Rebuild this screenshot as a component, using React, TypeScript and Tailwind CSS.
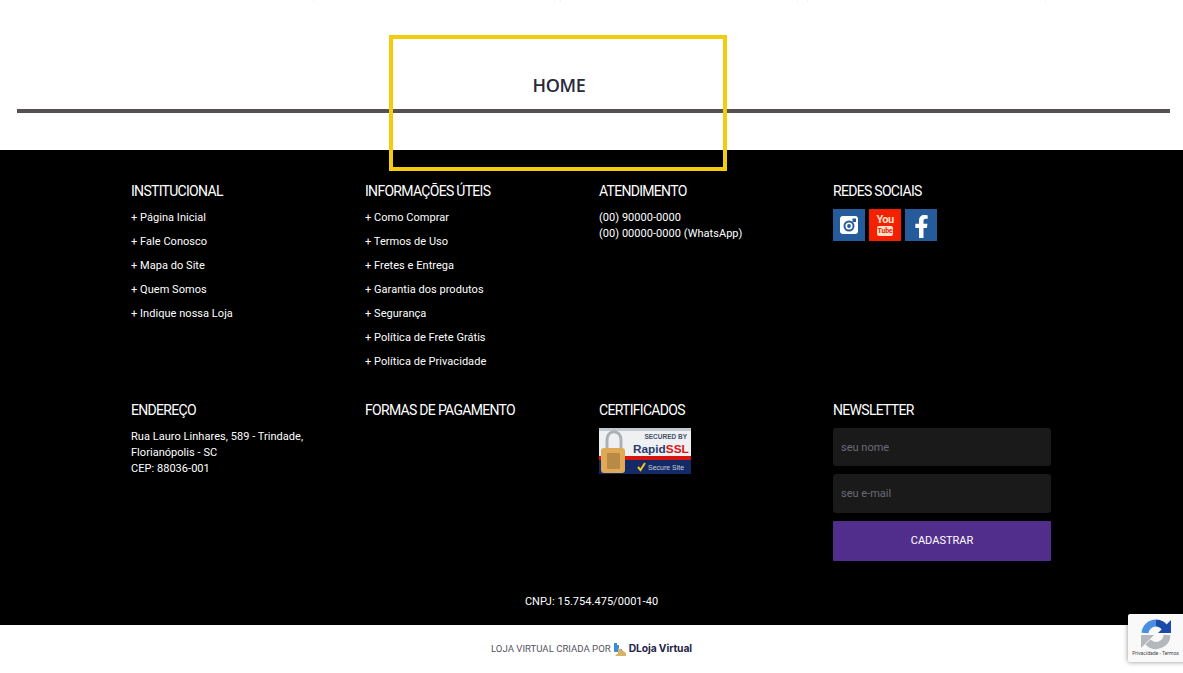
import React from 'react';
import { FaFacebookF } from 'react-icons/fa';

const institucional = ['Página Inicial', 'Fale Conosco', 'Mapa do Site', 'Quem Somos', 'Indique nossa Loja'];
const informacoes = [
  'Como Comprar',
  'Termos de Uso',
  'Fretes e Entrega',
  'Garantia dos produtos',
  'Segurança',
  'Política de Frete Grátis',
  'Política de Privacidade',
];

const bodyText = 'text-[11px] leading-[16px] font-[450] tracking-[0.04px] text-white';

function ColumnTitle({ children }: { children: React.ReactNode }) {
  return <h3 className="text-[14px] leading-[18px] font-normal text-white mb-[9px] tracking-[-0.7px]">{children}</h3>;
}

function LinkList({ items }: { items: string[] }) {
  return (
    <ul className="pt-[1px]">
      {items.map((item) => (
        <li key={item} className={`h-[24px] ${bodyText}`}>
          + {item}
        </li>
      ))}
    </ul>
  );
}

function RapidSsl() {
  return (
    <svg width="92" height="46" viewBox="0 0 92 46" className="block">
      <rect width="92" height="46" fill="#eef0f2" />
      <rect x="0" y="0" width="92" height="3" fill="#c4c9d0" />
      <rect x="0" y="28" width="92" height="4" fill="#d8140f" />
      <rect x="0" y="32" width="92" height="14" fill="#142a66" />
      <path d="M8 22V12c0-11 14-11 14 0v10" fill="none" stroke="#aeb1b4" strokeWidth="3" />
      <rect x="2" y="20" width="24" height="25" rx="3" fill="#e0a955" />
      <rect x="8" y="25" width="13" height="16" rx="1" fill="#b98a45" />
      <text x="88" y="11" textAnchor="end" fontSize="6.5" fontWeight="700" fill="#4a5068" fontFamily="'Liberation Sans', sans-serif">SECURED BY</text>
      <text x="34" y="25" fontSize="11.8" fontWeight="700" fill="#2b3b6e" fontFamily="'Liberation Sans', sans-serif">Rapid<tspan fill="#d8140f">SSL</tspan></text>
      <path d="M39 39l2.5 3 4.5-7" fill="none" stroke="#f2c61f" strokeWidth="2" />
      <text x="49" y="42" fontSize="7" fill="#c9cfdd" fontFamily="'Liberation Sans', sans-serif">Secure Site</text>
    </svg>
  );
}

function RecaptchaIcon() {
  return (
    <svg width="32" height="32" viewBox="0 0 32 32">
      <path d="M16 5A11 11 0 0 1 25 10" fill="none" stroke="#1c4aa8" strokeWidth="7" />
      <path d="M31 2V15H18z" fill="#1c4aa8" />
      <path d="M5 15A11 11 0 0 1 16 5" fill="none" stroke="#4a90e2" strokeWidth="7" />
      <path d="M27 17A11 11 0 0 1 8 24" fill="none" stroke="#b4b8bd" strokeWidth="7" />
      <path d="M1 30V17H14z" fill="#b4b8bd" />
    </svg>
  );
}

export default function App() {
  return (
    <div className="relative w-full h-[673px] overflow-hidden bg-white font-['Roboto',sans-serif]">
      {/* pontas do conteudo cortado no topo */}
      <div className="absolute left-[313px] top-0 w-[1px] h-[2px] bg-[#f3f3f3]" />
      <div className="absolute left-[554px] top-0 w-[1px] h-[2px] bg-[#f3f3f3]" />
      <div className="absolute left-[560px] top-0 w-[1px] h-[2px] bg-[#f3f3f3]" />
      <div className="absolute left-[797px] top-0 w-[1px] h-[2px] bg-[#f3f3f3]" />
      <div className="absolute left-[807px] top-0 w-[1px] h-[2px] bg-[#f3f3f3]" />
      <div className="absolute left-[1045px] top-0 w-[1px] h-[2px] bg-[#f3f3f3]" />

      {/* topo */}
      <section className="h-[150px] pl-[17px] pr-[13px] pt-[73px]">
        <h2 className="h-[24px] text-center text-[18px] leading-[24px] font-semibold tracking-[-0.3px] text-[#2a2a3a] pr-[69px] font-['Open_Sans',sans-serif]">
          HOME
        </h2>
        <div className="mt-[12px] h-[4px] bg-[#555153]" />
      </section>

      {/* rodape */}
      <footer className="h-[475px] bg-black">
        <div className="w-[936px] ml-[131px] pt-[32px] grid grid-cols-4">
          <div className="h-[219px]">
            <ColumnTitle>INSTITUCIONAL</ColumnTitle>
            <LinkList items={institucional} />
          </div>
          <div>
            <ColumnTitle>INFORMAÇÕES ÚTEIS</ColumnTitle>
            <LinkList items={informacoes} />
          </div>
          <div>
            <ColumnTitle>ATENDIMENTO</ColumnTitle>
            <div className="pt-[1px]">
              <p className={bodyText}>(00) 90000-0000</p>
              <p className={bodyText}>(00) 00000-0000 (WhatsApp)</p>
            </div>
          </div>
          <div>
            <ColumnTitle>REDES SOCIAIS</ColumnTitle>
            <div className="flex gap-[4px]">
              <div className="w-[32px] h-[32px] bg-[#255a9b] flex items-center justify-center">
                <svg width="18" height="18" viewBox="0 0 18 18">
                  <rect width="18" height="18" rx="3" fill="#fff" />
                  <rect x="12.5" y="2.5" width="3.5" height="3.5" fill="#255a9b" />
                  <circle cx="9" cy="10" r="5.5" fill="#255a9b" />
                  <circle cx="9" cy="10" r="3.6" fill="#fff" />
                  <circle cx="9" cy="10" r="1.9" fill="#255a9b" />
                </svg>
              </div>
              <div className="w-[32px] h-[32px] bg-[#f42000] flex flex-col items-center justify-center">
                <span className="text-[11px] leading-[10px] font-bold tracking-[-0.6px] text-[#f8e0c8]">You</span>
                <span className="mt-[1px] w-[16px] h-[10px] rounded-[2px] bg-[#f8e0c8] text-center text-[7px] leading-[10px] font-bold tracking-[-0.2px] text-[#f42000]">Tube</span>
              </div>
              <div className="w-[32px] h-[32px] pt-[2px] bg-[#255a9b] flex items-center justify-center text-white text-[23px]">
                <FaFacebookF />
              </div>
            </div>
          </div>

          <div className="h-[193px]">
            <ColumnTitle>ENDEREÇO</ColumnTitle>
            <p className={`pt-[1px] ${bodyText}`}>
              Rua Lauro Linhares, 589 - Trindade,
              <br />
              Florianópolis - SC
              <br />
              CEP: 88036-001
            </p>
          </div>
          <div>
            <ColumnTitle>FORMAS DE PAGAMENTO</ColumnTitle>
          </div>
          <div>
            <ColumnTitle>CERTIFICADOS</ColumnTitle>
            <RapidSsl />
          </div>
          <div>
            <ColumnTitle>NEWSLETTER</ColumnTitle>
            <form className="w-[218px] flex flex-col gap-[8px]">
              <input
                placeholder="seu nome"
                className="h-[38px] px-[8px] rounded-[3px] bg-[#1a1a1a] text-[11px] font-[450] placeholder:text-[#6c6a76] outline-none"
              />
              <input
                placeholder="seu e-mail"
                className="h-[39px] px-[8px] rounded-[3px] bg-[#1a1a1a] text-[11px] font-[450] placeholder:text-[#6c6a76] outline-none"
              />
              <button type="button" className="h-[40px] rounded-[1px] bg-[#522e8c] text-[11px] font-[450] text-white">
                CADASTRAR
              </button>
            </form>
          </div>
        </div>
        <p className={`text-center ${bodyText}`}>CNPJ: 15.754.475/0001-40</p>
      </footer>

      {/* assinatura */}
      <div className="h-[48px] flex items-center justify-center gap-[2px] bg-white">
        <span className="text-[9.6px] text-[#55555f]">LOJA VIRTUAL CRIADA POR</span>
        <svg width="14" height="13" viewBox="0 0 14 13">
          <path d="M1 0h3v2h2v4h3v3H1z" fill="#3c8fd6" />
          <path d="M5 5l4 2 4 3v3H2l3-3z" fill="#d9b26a" />
        </svg>
        <span className="text-[10.3px] font-bold tracking-[-0.1px] text-[#1f2547] font-['Inter',sans-serif]">DLoja Virtual</span>
      </div>

      {/* moldura amarela sobre o conteudo */}
      <div className="absolute left-[389px] top-[35px] w-[338px] h-[136px] border-[4px] border-[#f2cd0c]" />

      {/* selo recaptcha */}
      <div className="absolute left-[1128px] top-[614px] w-[70px] h-[48px] rounded-[2px] bg-[#f9f9f9] shadow-[0_0_5px_rgba(0,0,0,0.45)]">
        <div className="w-[55px] flex flex-col items-center pt-[4px]">
          <RecaptchaIcon />
          <span className="text-[5px] leading-[6px] text-[#444]">Privacidade - Termos</span>
        </div>
      </div>
    </div>
  );
}
